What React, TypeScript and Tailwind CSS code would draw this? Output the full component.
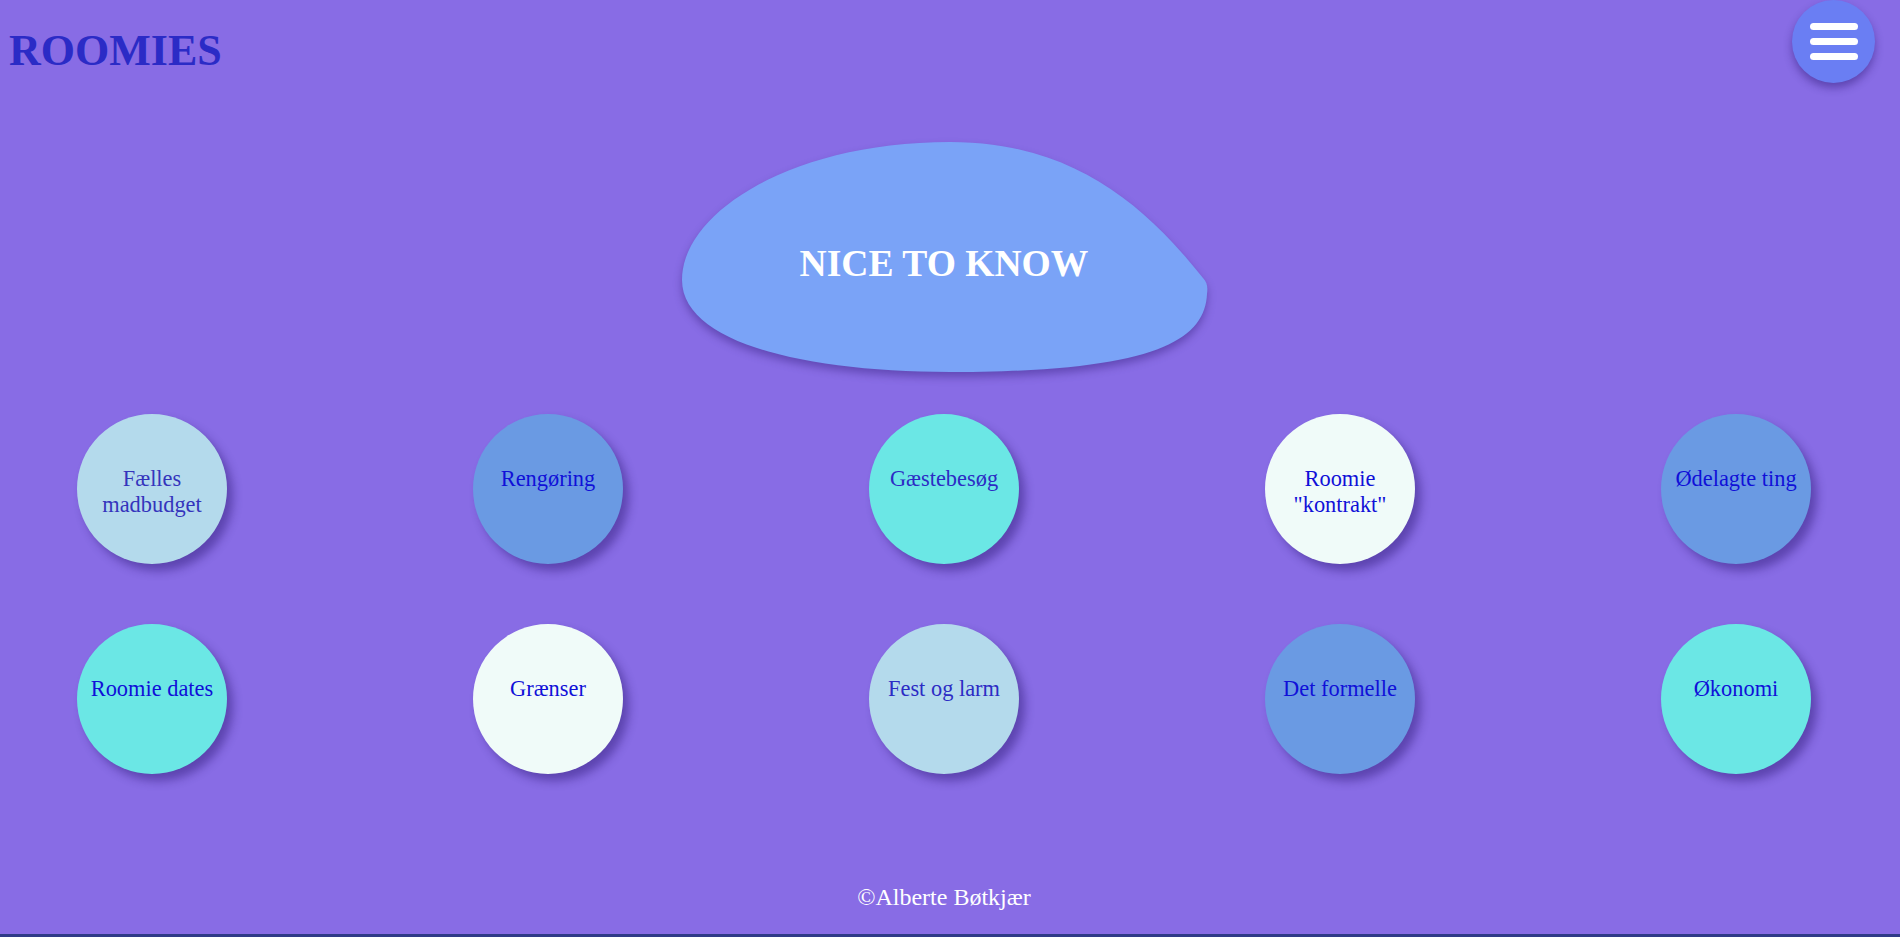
import React from "react";

type Topic = { label: string; bg: string; text: string };

const LIGHT = "bg-[#b4daec]";
const BLUE = "bg-[#6a9ae3]";
const TURQ = "bg-[#6be7e5]";
const WHITE = "bg-[#f0fbf9]";

const rows: Topic[][] = [
  [
    { label: "Fælles madbudget", bg: LIGHT, text: "text-[#3434bc]" },
    { label: "Rengøring", bg: BLUE, text: "text-[#1010d8]" },
    { label: "Gæstebesøg", bg: TURQ, text: "text-[#2c2cc4]" },
    { label: 'Roomie "kontrakt"', bg: WHITE, text: "text-[#1010d8]" },
    { label: "Ødelagte ting", bg: BLUE, text: "text-[#1010d8]" },
  ],
  [
    { label: "Roomie dates", bg: TURQ, text: "text-[#1010d8]" },
    { label: "Grænser", bg: WHITE, text: "text-[#1010d8]" },
    { label: "Fest og larm", bg: LIGHT, text: "text-[#2c2cc4]" },
    { label: "Det formelle", bg: BLUE, text: "text-[#1010d8]" },
    { label: "Økonomi", bg: TURQ, text: "text-[#1010d8]" },
  ],
];

function TopicBubble({ topic }: { topic: Topic }) {
  return (
    <a
      href="#"
      className={`w-[150px] h-[150px] shrink-0 rounded-full ${topic.bg} shadow-[6px_7px_10px_rgba(40,20,110,0.45)] flex justify-center px-3 pt-[52px]`}
    >
      <span className={`text-center text-[22.4px] leading-[26px] ${topic.text}`}>
        {topic.label}
      </span>
    </a>
  );
}

function MenuButton() {
  return (
    <button
      type="button"
      aria-label="Menu"
      className="w-[83px] h-[83px] rounded-full bg-[#6a7ef3] shadow-[0_5px_9px_rgba(40,20,110,0.45)] flex flex-col items-center justify-center gap-[8px] mr-[13px]"
    >
      <span className="block w-[48px] h-[7px] rounded-full bg-white" />
      <span className="block w-[48px] h-[7px] rounded-full bg-white" />
      <span className="block w-[48px] h-[7px] rounded-full bg-white" />
    </button>
  );
}

// teardrop-ish blob behind the heading, pointed towards the right
function Blob() {
  return (
    <svg
      viewBox="0 0 525 232"
      className="absolute inset-0 w-full h-full overflow-visible drop-shadow-[0_5px_4px_rgba(40,20,110,0.4)]"
      aria-hidden="true"
    >
      <path
        d="M268 0 C390 0 462 62 521 136 C525 140 526 145 525 152 C523 200 468 230 268 230 C120 230 0 200 0 138 C0 70 110 0 268 0 Z"
        fill="#7aa3f7"
      />
    </svg>
  );
}

export default function App() {
  return (
    <div className="h-[937px] w-full bg-[#886ce5] flex flex-col font-['Liberation_Serif',serif] overflow-hidden">
      <div className="w-[1888px] flex flex-col">
        <header className="h-[83px] flex items-start justify-between">
          <h1 className="mt-[26px] ml-[9px] text-[44px] leading-[50px] font-bold text-[#2b2bc6]">
            ROOMIES
          </h1>
          <MenuButton />
        </header>

        <main className="flex flex-col items-center">
          <div className="relative mt-[59px] w-[525px] h-[232px] flex items-center justify-center pt-[12px]">
            <Blob />
            <h2 className="relative text-[37.6px] leading-[42px] font-bold text-white">
              NICE TO KNOW
            </h2>
          </div>

          <div className="mt-[40px] w-full px-[77px] flex flex-col gap-[60px]">
            {rows.map((row, i) => (
              <div key={i} className="flex justify-between">
                {row.map((t) => (
                  <TopicBubble key={t.label} topic={t} />
                ))}
              </div>
            ))}
          </div>
        </main>

        <footer className="mt-[110px] text-center text-[24px] leading-[27px] text-white">
          ©Alberte Bøtkjær
        </footer>
      </div>
      <div className="mt-auto h-[3px] bg-[#2f3a88]" />
    </div>
  );
}
